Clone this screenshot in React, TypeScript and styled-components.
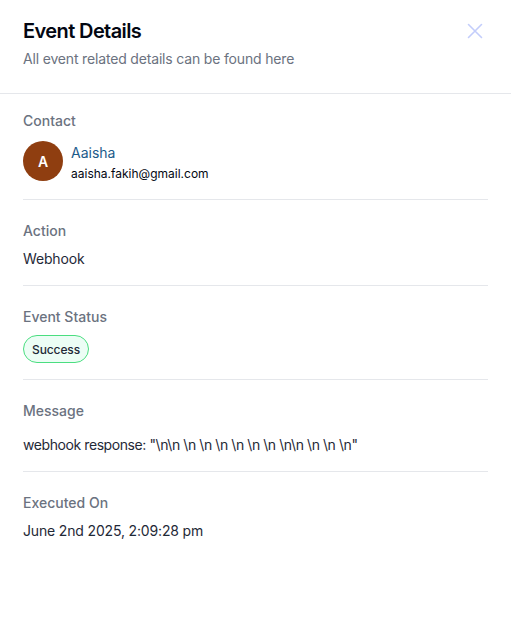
import React from "react";
import styled, { createGlobalStyle } from "styled-components";

const Global = createGlobalStyle`
  html, body { margin: 0; padding: 0; background: #ffffff; }
  body { font-family: Inter, "Noto Sans", sans-serif; -webkit-font-smoothing: antialiased; }
  * { box-sizing: border-box; }
`;

const Panel = styled.div`
  width: 511px;
  min-height: 624px;
  background: #ffffff;
  display: flex;
  flex-direction: column;
`;

const Header = styled.div`
  display: flex;
  justify-content: space-between;
  align-items: flex-start;
  padding: 17px 23px 24px;
  border-bottom: 1px solid #e5e7eb;
`;

const TitleBlock = styled.div`
  display: flex;
  flex-direction: column;
  gap: 4px;
`;

const Title = styled.h2`
  margin: 0;
  font-size: 20px;
  line-height: 28px;
  font-weight: 600;
  letter-spacing: -0.6px;
  color: #030712;
`;

const Subtitle = styled.p`
  margin: 0;
  font-size: 14px;
  line-height: 20px;
  letter-spacing: -0.17px;
  color: #6b7280;
`;

const CloseButton = styled.button`
  border: none;
  background: transparent;
  padding: 0;
  margin: 6px 5px 0 0;
  width: 16px;
  height: 16px;
  display: flex;
  align-items: center;
  justify-content: center;
  cursor: pointer;
  color: #c3cdfb;
`;

const Body = styled.div`
  display: flex;
  flex-direction: column;
  padding: 0 23px;
`;

const Section = styled.section<{ $first?: boolean; $last?: boolean; $gap?: number }>`
  display: flex;
  flex-direction: column;
  gap: ${(p) => p.$gap ?? 8}px;
  padding: ${(p) => (p.$first ? 17 : 21)}px 0 16px;
  border-bottom: ${(p) => (p.$last ? "none" : "1px solid #e5e7eb")};
`;

const Label = styled.div`
  font-size: 14px;
  line-height: 20px;
  font-weight: 500;
  color: #6b7280;
`;

const Value = styled.div<{ $tight?: boolean }>`
  font-size: 14px;
  line-height: 20px;
  letter-spacing: ${(p) => (p.$tight ? "-0.42px" : "-0.16px")};
  color: #1f2937;
`;

const ContactRow = styled.div`
  display: flex;
  align-items: flex-start;
  gap: 8px;
  padding: 2px 0 1px;
`;

const Avatar = styled.div`
  width: 40px;
  height: 40px;
  border-radius: 50%;
  background: #8f3e10;
  color: #ffffff;
  font-size: 14px;
  font-weight: 600;
  display: flex;
  align-items: center;
  justify-content: center;
  flex-shrink: 0;
`;

const ContactInfo = styled.div`
  display: flex;
  flex-direction: column;
  gap: 3px;
  padding-top: 2px;
`;

const ContactName = styled.a`
  font-size: 14px;
  line-height: 20px;
  color: #1c5b8a;
  text-decoration: none;
`;

const ContactEmail = styled.div`
  font-size: 12px;
  line-height: 16px;
  color: #030712;
`;

const Badge = styled.span`
  align-self: flex-start;
  display: inline-flex;
  align-items: center;
  height: 28px;
  padding: 0 8px;
  border-radius: 999px;
  border: 1px solid #4ade80;
  background: #ecfdf5;
  font-size: 12px;
  font-weight: 500;
  letter-spacing: -0.1px;
  color: #1f2937;
`;

export default function App() {
  return (
    <>
      <Global />
      <Panel>
        <Header>
          <TitleBlock>
            <Title>Event Details</Title>
            <Subtitle>All event related details can be found here</Subtitle>
          </TitleBlock>
          <CloseButton aria-label="Close">
            <svg width="16" height="16" viewBox="0 0 16 16" fill="none">
              <path d="M1.5 1.5L14.5 14.5M14.5 1.5L1.5 14.5" stroke="currentColor" strokeWidth="1.6" strokeLinecap="round" />
            </svg>
          </CloseButton>
        </Header>
        <Body>
          <Section $first>
            <Label>Contact</Label>
            <ContactRow>
              <Avatar>A</Avatar>
              <ContactInfo>
                <ContactName href="#">Aaisha</ContactName>
                <ContactEmail>aaisha.fakih@gmail.com</ContactEmail>
              </ContactInfo>
            </ContactRow>
          </Section>
          <Section>
            <Label>Action</Label>
            <Value>Webhook</Value>
          </Section>
          <Section>
            <Label>Event Status</Label>
            <Badge>Success</Badge>
          </Section>
          <Section $gap={14}>
            <Label>Message</Label>
            <Value $tight>{'webhook response: "\\n\\n \\n \\n \\n \\n \\n \\n \\n\\n \\n \\n \\n"'}</Value>
          </Section>
          <Section $last>
            <Label>Executed On</Label>
            <Value>June 2nd 2025, 2:09:28 pm</Value>
          </Section>
        </Body>
      </Panel>
    </>
  );
}
